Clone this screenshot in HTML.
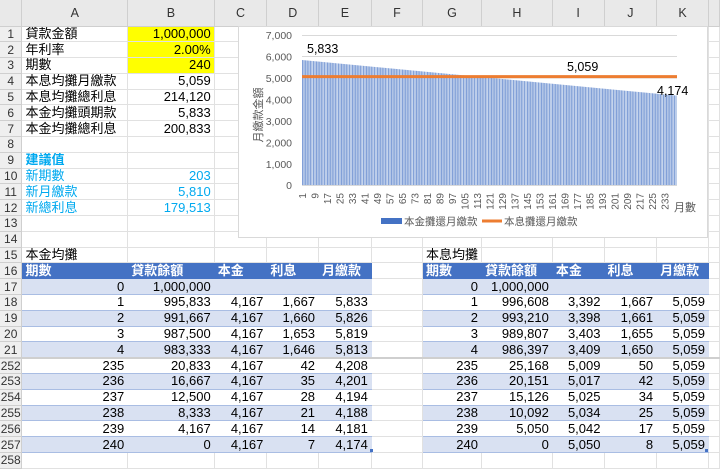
<!DOCTYPE html>
<html><head><meta charset="utf-8"><style>
*{margin:0;padding:0;box-sizing:border-box}
body{width:720px;height:466px;overflow:hidden;background:#fff;font-family:"Liberation Sans","Noto Sans CJK TC",sans-serif;font-size:13px;color:#000;position:relative}
table{border-collapse:collapse;table-layout:fixed;position:absolute;left:0;top:0}
td{height:15.8px;border-right:1px solid #e1e1e1;border-bottom:1px solid #e1e1e1;padding:0 3px;white-space:nowrap;overflow:hidden;line-height:14px}
tr.h td{height:26px;background:#e9e9e9;text-align:center;color:#333;border-color:#cfcfcf;font-size:12.5px}
td.n{background:#efefef;text-align:center;color:#333;font-size:12px;padding:0;border-color:#cfcfcf}
.r{text-align:right}
.y{background:#ffff00}
.c{color:#00a9ef}
.b{font-weight:bold}
.th{background:#4472c4;color:#fff;font-weight:bold;border-right-color:#4472c4;border-bottom-color:#4472c4}
.bd{background:#d9e1f2}
.t{border-right-color:transparent;border-bottom:1px solid #a9bde3}
.bd.t{border-right-color:#d9e1f2}
tr.sep td{border-top:2px solid #cfcfcf}
</style></head><body>
<table>
<colgroup><col style="width:22px"><col style="width:106px"><col style="width:87px"><col style="width:53px"><col style="width:52px"><col style="width:53px"><col style="width:52px"><col style="width:56px"><col style="width:71px"><col style="width:52px"><col style="width:53px"><col style="width:52px"><col style="width:11px"></colgroup>
<tr class="h"><td></td><td>A</td><td>B</td><td>C</td><td>D</td><td>E</td><td>F</td><td>G</td><td>H</td><td>I</td><td>J</td><td>K</td><td></td></tr>
<tr><td class="n">1</td><td>貸款金額</td><td class="r y">1,000,000</td><td></td><td></td><td></td><td></td><td></td><td></td><td></td><td></td><td></td><td></td></tr>
<tr><td class="n">2</td><td>年利率</td><td class="r y">2.00%</td><td></td><td></td><td></td><td></td><td></td><td></td><td></td><td></td><td></td><td></td></tr>
<tr><td class="n">3</td><td>期數</td><td class="r y">240</td><td></td><td></td><td></td><td></td><td></td><td></td><td></td><td></td><td></td><td></td></tr>
<tr><td class="n">4</td><td>本息均攤月繳款</td><td class="r">5,059</td><td></td><td></td><td></td><td></td><td></td><td></td><td></td><td></td><td></td><td></td></tr>
<tr><td class="n">5</td><td>本息均攤總利息</td><td class="r">214,120</td><td></td><td></td><td></td><td></td><td></td><td></td><td></td><td></td><td></td><td></td></tr>
<tr><td class="n">6</td><td>本金均攤頭期款</td><td class="r">5,833</td><td></td><td></td><td></td><td></td><td></td><td></td><td></td><td></td><td></td><td></td></tr>
<tr><td class="n">7</td><td>本金均攤總利息</td><td class="r">200,833</td><td></td><td></td><td></td><td></td><td></td><td></td><td></td><td></td><td></td><td></td></tr>
<tr><td class="n">8</td><td></td><td></td><td></td><td></td><td></td><td></td><td></td><td></td><td></td><td></td><td></td><td></td></tr>
<tr><td class="n">9</td><td class="c b">建議值</td><td></td><td></td><td></td><td></td><td></td><td></td><td></td><td></td><td></td><td></td><td></td></tr>
<tr><td class="n">10</td><td class="c">新期數</td><td class="r c">203</td><td></td><td></td><td></td><td></td><td></td><td></td><td></td><td></td><td></td><td></td></tr>
<tr><td class="n">11</td><td class="c">新月繳款</td><td class="r c">5,810</td><td></td><td></td><td></td><td></td><td></td><td></td><td></td><td></td><td></td><td></td></tr>
<tr><td class="n">12</td><td class="c">新總利息</td><td class="r c">179,513</td><td></td><td></td><td></td><td></td><td></td><td></td><td></td><td></td><td></td><td></td></tr>
<tr><td class="n">13</td><td></td><td></td><td></td><td></td><td></td><td></td><td></td><td></td><td></td><td></td><td></td><td></td></tr>
<tr><td class="n">14</td><td></td><td></td><td></td><td></td><td></td><td></td><td></td><td></td><td></td><td></td><td></td><td></td></tr>
<tr><td class="n">15</td><td>本金均攤</td><td></td><td></td><td></td><td></td><td></td><td>本息均攤</td><td></td><td></td><td></td><td></td><td></td></tr>
<tr><td class="n">16</td><td class="th">期數</td><td class="th">貸款餘額</td><td class="th">本金</td><td class="th">利息</td><td class="th">月繳款</td><td></td><td class="th">期數</td><td class="th">貸款餘額</td><td class="th">本金</td><td class="th">利息</td><td class="th">月繳款</td><td></td></tr>
<tr><td class="n">17</td><td class="r bd t">0</td><td class="r bd t">1,000,000</td><td class="bd t"></td><td class="bd t"></td><td class="bd t"></td><td></td><td class="r bd t">0</td><td class="r bd t">1,000,000</td><td class="bd t"></td><td class="bd t"></td><td class="bd t"></td><td></td></tr>
<tr><td class="n">18</td><td class="r t">1</td><td class="r t">995,833</td><td class="r t">4,167</td><td class="r t">1,667</td><td class="r t">5,833</td><td></td><td class="r t">1</td><td class="r t">996,608</td><td class="r t">3,392</td><td class="r t">1,667</td><td class="r t">5,059</td><td></td></tr>
<tr><td class="n">19</td><td class="r bd t">2</td><td class="r bd t">991,667</td><td class="r bd t">4,167</td><td class="r bd t">1,660</td><td class="r bd t">5,826</td><td></td><td class="r bd t">2</td><td class="r bd t">993,210</td><td class="r bd t">3,398</td><td class="r bd t">1,661</td><td class="r bd t">5,059</td><td></td></tr>
<tr><td class="n">20</td><td class="r t">3</td><td class="r t">987,500</td><td class="r t">4,167</td><td class="r t">1,653</td><td class="r t">5,819</td><td></td><td class="r t">3</td><td class="r t">989,807</td><td class="r t">3,403</td><td class="r t">1,655</td><td class="r t">5,059</td><td></td></tr>
<tr><td class="n">21</td><td class="r bd t">4</td><td class="r bd t">983,333</td><td class="r bd t">4,167</td><td class="r bd t">1,646</td><td class="r bd t">5,813</td><td></td><td class="r bd t">4</td><td class="r bd t">986,397</td><td class="r bd t">3,409</td><td class="r bd t">1,650</td><td class="r bd t">5,059</td><td></td></tr>
<tr class="sep"><td class="n">252</td><td class="r t">235</td><td class="r t">20,833</td><td class="r t">4,167</td><td class="r t">42</td><td class="r t">4,208</td><td></td><td class="r t">235</td><td class="r t">25,168</td><td class="r t">5,009</td><td class="r t">50</td><td class="r t">5,059</td><td></td></tr>
<tr><td class="n">253</td><td class="r bd t">236</td><td class="r bd t">16,667</td><td class="r bd t">4,167</td><td class="r bd t">35</td><td class="r bd t">4,201</td><td></td><td class="r bd t">236</td><td class="r bd t">20,151</td><td class="r bd t">5,017</td><td class="r bd t">42</td><td class="r bd t">5,059</td><td></td></tr>
<tr><td class="n">254</td><td class="r t">237</td><td class="r t">12,500</td><td class="r t">4,167</td><td class="r t">28</td><td class="r t">4,194</td><td></td><td class="r t">237</td><td class="r t">15,126</td><td class="r t">5,025</td><td class="r t">34</td><td class="r t">5,059</td><td></td></tr>
<tr><td class="n">255</td><td class="r bd t">238</td><td class="r bd t">8,333</td><td class="r bd t">4,167</td><td class="r bd t">21</td><td class="r bd t">4,188</td><td></td><td class="r bd t">238</td><td class="r bd t">10,092</td><td class="r bd t">5,034</td><td class="r bd t">25</td><td class="r bd t">5,059</td><td></td></tr>
<tr><td class="n">256</td><td class="r t">239</td><td class="r t">4,167</td><td class="r t">4,167</td><td class="r t">14</td><td class="r t">4,181</td><td></td><td class="r t">239</td><td class="r t">5,050</td><td class="r t">5,042</td><td class="r t">17</td><td class="r t">5,059</td><td></td></tr>
<tr><td class="n">257</td><td class="r bd t">240</td><td class="r bd t">0</td><td class="r bd t">4,167</td><td class="r bd t">7</td><td class="r bd t">4,174</td><td></td><td class="r bd t">240</td><td class="r bd t">0</td><td class="r bd t">5,050</td><td class="r bd t">8</td><td class="r bd t">5,059</td><td></td></tr>
<tr><td class="n">258</td><td></td><td></td><td></td><td></td><td></td><td></td><td></td><td></td><td></td><td></td><td></td><td></td></tr>
</table>
<svg width="720" height="466" style="position:absolute;left:0;top:0" font-family="Liberation Sans, Noto Sans CJK TC, sans-serif">
<defs><pattern id="st" x="302" y="0" width="1.5625" height="10" patternUnits="userSpaceOnUse"><rect width="1.5625" height="10" fill="#fff"/><rect width="1.1" height="10" fill="#7d9dd6"/></pattern></defs>
<rect x="238.5" y="26.5" width="469" height="211" fill="#fff" stroke="#d9d9d9"/>
<g stroke="#d9d9d9" stroke-width="1">
<line x1="302" x2="677" y1="35.5" y2="35.5"/><line x1="302" x2="677" y1="56.5" y2="56.5"/><line x1="302" x2="677" y1="78" y2="78"/><line x1="302" x2="677" y1="99.5" y2="99.5"/><line x1="302" x2="677" y1="121" y2="121"/><line x1="302" x2="677" y1="142.5" y2="142.5"/><line x1="302" x2="677" y1="164" y2="164"/>
</g>
<polygon points="302,60 677,95.6 677,185 302,185" fill="url(#st)"/>
<line x1="302" x2="677" y1="185.5" y2="185.5" stroke="#d9d9d9"/>
<line x1="302" x2="677" y1="76.6" y2="76.6" stroke="#ed7d31" stroke-width="3"/>
<g font-size="10.5" fill="#595959" text-anchor="end">
<text x="292" y="39">7,000</text><text x="292" y="60.5">6,000</text><text x="292" y="82">5,000</text><text x="292" y="103.5">4,000</text><text x="292" y="125">3,000</text><text x="292" y="146.5">2,000</text><text x="292" y="168">1,000</text><text x="292" y="189">0</text>
</g>
<text transform="translate(262,115) rotate(-90)" font-size="11" fill="#595959" text-anchor="middle">月繳款金額</text>
<g font-size="12.5" fill="#000"><text x="307" y="53">5,833</text><text x="567" y="71">5,059</text><text x="657" y="95">4,174</text></g>
<g font-size="10" fill="#595959" text-anchor="end">
<text transform="translate(306,193) rotate(-90)">1</text><text transform="translate(318.5,193) rotate(-90)">9</text><text transform="translate(331,193) rotate(-90)">17</text><text transform="translate(343.5,193) rotate(-90)">25</text><text transform="translate(356,193) rotate(-90)">33</text><text transform="translate(368.5,193) rotate(-90)">41</text><text transform="translate(381,193) rotate(-90)">49</text><text transform="translate(393.5,193) rotate(-90)">57</text><text transform="translate(406,193) rotate(-90)">65</text><text transform="translate(418.5,193) rotate(-90)">73</text><text transform="translate(431,193) rotate(-90)">81</text><text transform="translate(443.5,193) rotate(-90)">89</text><text transform="translate(456,193) rotate(-90)">97</text><text transform="translate(468.5,193) rotate(-90)">105</text><text transform="translate(481,193) rotate(-90)">113</text><text transform="translate(493.5,193) rotate(-90)">121</text><text transform="translate(506,193) rotate(-90)">129</text><text transform="translate(518.5,193) rotate(-90)">137</text><text transform="translate(531,193) rotate(-90)">145</text><text transform="translate(543.5,193) rotate(-90)">153</text><text transform="translate(556,193) rotate(-90)">161</text><text transform="translate(568.5,193) rotate(-90)">169</text><text transform="translate(581,193) rotate(-90)">177</text><text transform="translate(593.5,193) rotate(-90)">185</text><text transform="translate(606,193) rotate(-90)">193</text><text transform="translate(618.5,193) rotate(-90)">201</text><text transform="translate(631,193) rotate(-90)">209</text><text transform="translate(643.5,193) rotate(-90)">217</text><text transform="translate(656,193) rotate(-90)">225</text><text transform="translate(668.5,193) rotate(-90)">233</text>
</g>
<text x="674" y="211" font-size="11" fill="#595959">月數</text>
<rect x="381" y="218" width="21" height="6" fill="#4472c4"/>
<text x="404" y="225" font-size="10.5" fill="#595959">本金攤還月繳款</text>
<line x1="482" x2="502" y1="221" y2="221" stroke="#ed7d31" stroke-width="3"/>
<text x="504" y="225" font-size="10.5" fill="#595959">本息攤還月繳款</text>
<rect x="370" y="449" width="3" height="3" fill="#4472c4"/>
<rect x="705" y="449" width="3" height="3" fill="#4472c4"/>
</svg>
</body></html>
